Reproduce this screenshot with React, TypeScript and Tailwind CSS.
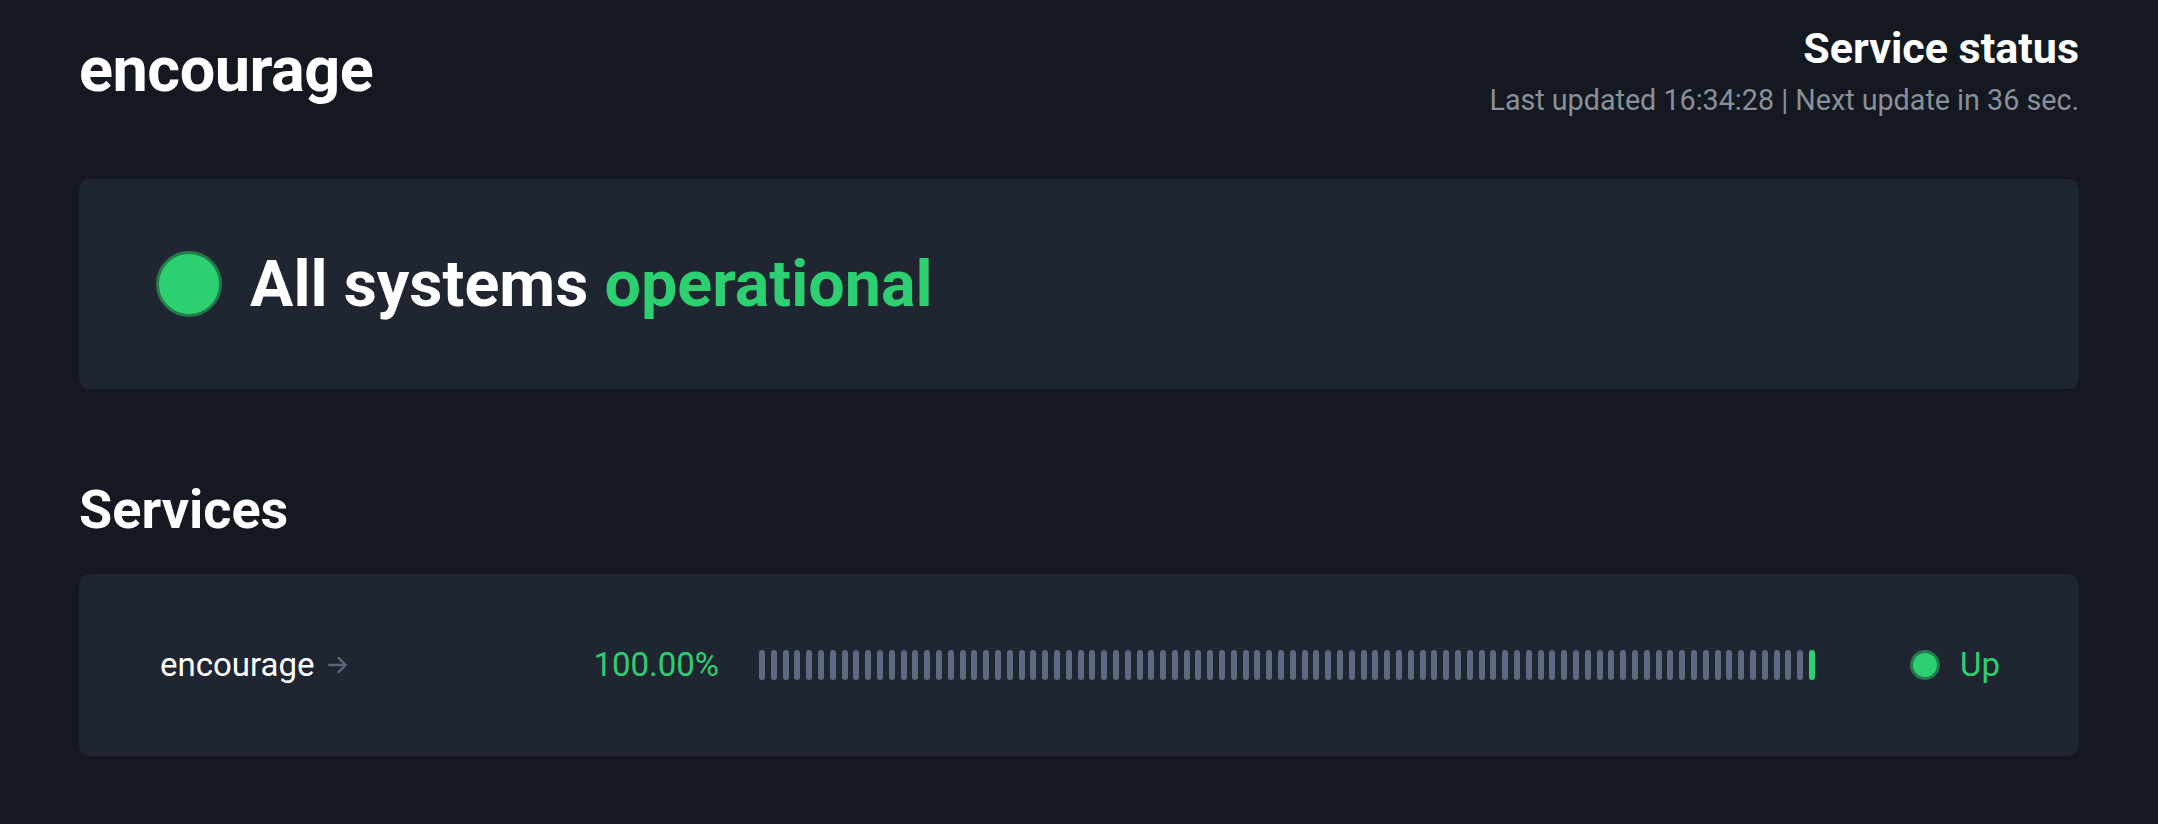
import React from "react";

const BAR_COUNT = 90;

const StatusDot = ({ size }: { size: "lg" | "sm" }) => (
  <span
    className={
      size === "lg"
        ? "block h-[66px] w-[66px] shrink-0 rounded-full border-[3px] border-[#237a4a] bg-[#2dd070]"
        : "block h-[30px] w-[30px] shrink-0 rounded-full border-[3px] border-[#237a4a] bg-[#2dd070]"
    }
  />
);

const ArrowIcon = () => (
  <svg className="h-[26px] w-[26px] text-[#5c677a]" viewBox="0 0 24 24" fill="none" stroke="currentColor" strokeWidth={2.2} strokeLinecap="round" strokeLinejoin="round">
    <path d="M4 12h15" />
    <path d="M12.5 5.5L19 12l-6.5 6.5" />
  </svg>
);

function UptimeBars() {
  return (
    <div className="flex flex-1 items-center justify-between">
      {Array.from({ length: BAR_COUNT }).map((_, i) => (
        <span
          key={i}
          className={
            i === BAR_COUNT - 1
              ? "block h-[30px] w-[6px] rounded-full bg-[#2dd070]"
              : "block h-[30px] w-[6px] rounded-full bg-[#5d6a80]"
          }
        />
      ))}
    </div>
  );
}

export default function App() {
  return (
    <div className="min-h-screen bg-[#131821] text-white" style={{ fontFamily: "Roboto, 'Liberation Sans', sans-serif" }}>
      <div className="mx-auto w-[2000px] pt-[24px]">
        <header className="flex items-start justify-between">
          <h1 className="mt-[14px] text-[63px] font-bold leading-[64px] tracking-[-0.5px]">encourage</h1>
          <div className="text-right">
            <div className="text-[43px] font-bold leading-[48px]">Service status</div>
            <div className="mt-[12px] text-[28.7px] leading-[32px] text-[#8a9099]">
              Last updated 16:34:28 | Next update in 36 sec.
            </div>
          </div>
        </header>

        <section className="mt-[63px] flex h-[210px] items-center gap-[28px] rounded-[11px] bg-[#1f2531] px-[77px]">
          <StatusDot size="lg" />
          <div className="text-[64.6px] font-bold leading-[66px]">
            All systems <span className="text-[#2dd070]">operational</span>
          </div>
        </section>

        <h2 className="mt-[94px] text-[54px] font-bold leading-[54px]">Services</h2>

        <section className="mt-[37px] flex h-[182px] items-center rounded-[11px] bg-[#1f2531] pl-[81px] pr-[82px]">
          <div className="flex w-[400px] items-center gap-[10px] text-[33px] leading-[40px]">
            <span>encourage</span>
            <ArrowIcon />
          </div>
          <div className="w-[159px] text-right text-[33px] leading-[40px] text-[#2dd070]">100.00%</div>
          <div className="ml-[40px] flex flex-1 items-center">
            <UptimeBars />
          </div>
          <div className="ml-[95px] flex w-[87px] items-center gap-[20px] text-[33px] leading-[40px] text-[#2dd070]">
            <StatusDot size="sm" />
            <span>Up</span>
          </div>
        </section>
      </div>
    </div>
  );
}
